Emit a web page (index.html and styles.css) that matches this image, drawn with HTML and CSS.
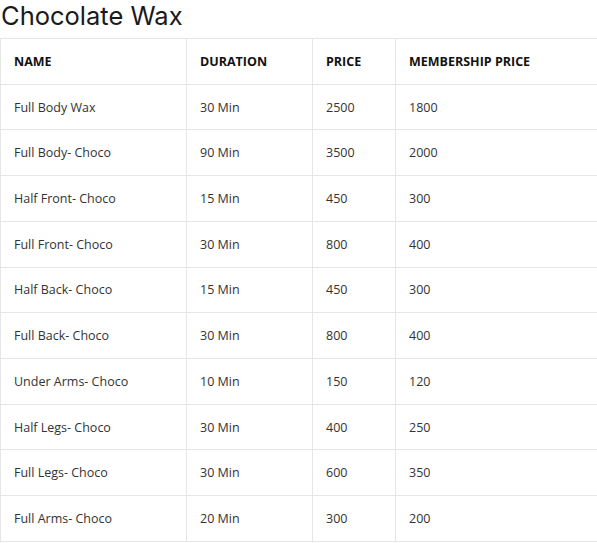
FILE: index.html
```html
<!DOCTYPE html>
<html>
<head>
<meta charset="utf-8">
<link rel="stylesheet" href="styles.css">
</head>
<body>
<h2 class="title">Chocolate Wax</h2>
<table class="price-table">
  <colgroup>
    <col class="c1"><col class="c2"><col class="c3"><col class="c4">
  </colgroup>
  <thead>
    <tr><th>NAME</th><th>DURATION</th><th>PRICE</th><th>MEMBERSHIP PRICE</th></tr>
  </thead>
  <tbody>
    <tr><td>Full Body Wax</td><td>30 Min</td><td>2500</td><td>1800</td></tr>
    <tr><td>Full Body- Choco</td><td>90 Min</td><td>3500</td><td>2000</td></tr>
    <tr><td>Half Front- Choco</td><td>15 Min</td><td>450</td><td>300</td></tr>
    <tr><td>Full Front- Choco</td><td>30 Min</td><td>800</td><td>400</td></tr>
    <tr><td>Half Back- Choco</td><td>15 Min</td><td>450</td><td>300</td></tr>
    <tr><td>Full Back- Choco</td><td>30 Min</td><td>800</td><td>400</td></tr>
    <tr><td>Under Arms- Choco</td><td>10 Min</td><td>150</td><td>120</td></tr>
    <tr><td>Half Legs- Choco</td><td>30 Min</td><td>400</td><td>250</td></tr>
    <tr><td>Full Legs- Choco</td><td>30 Min</td><td>600</td><td>350</td></tr>
    <tr><td>Full Arms- Choco</td><td>20 Min</td><td>300</td><td>200</td></tr>
  </tbody>
</table>
</body>
</html>
```
FILE: styles.css
```css
html, body {
  margin: 0;
  padding: 0;
  background: #fff;
}
body {
  font-family: "Open Sans", "Liberation Sans", sans-serif;
  color: #222;
}
.title {
  margin: 0;
  padding: 0 0 0 1px;
  height: 38px;
  font-family: "Inter", "Liberation Sans", sans-serif;
  font-weight: 400;
  font-size: 25.5px;
  line-height: 31px;
  color: #1a1a1a;
  box-sizing: border-box;
}
.price-table {
  border-collapse: collapse;
  width: 597px;
  table-layout: fixed;
}
.c1 { width: 186px; }
.c2 { width: 126px; }
.c3 { width: 83px; }
.c4 { width: 202px; }
.price-table th,
.price-table td {
  border: 1px solid #e6e6e6;
  height: 45.73px;
  padding: 0 0 0 13px;
  text-align: left;
  font-size: 12.5px;
  box-sizing: border-box;
}
.price-table th {
  font-weight: 700;
  color: #111;
}
.price-table td {
  color: #333;
}
```
